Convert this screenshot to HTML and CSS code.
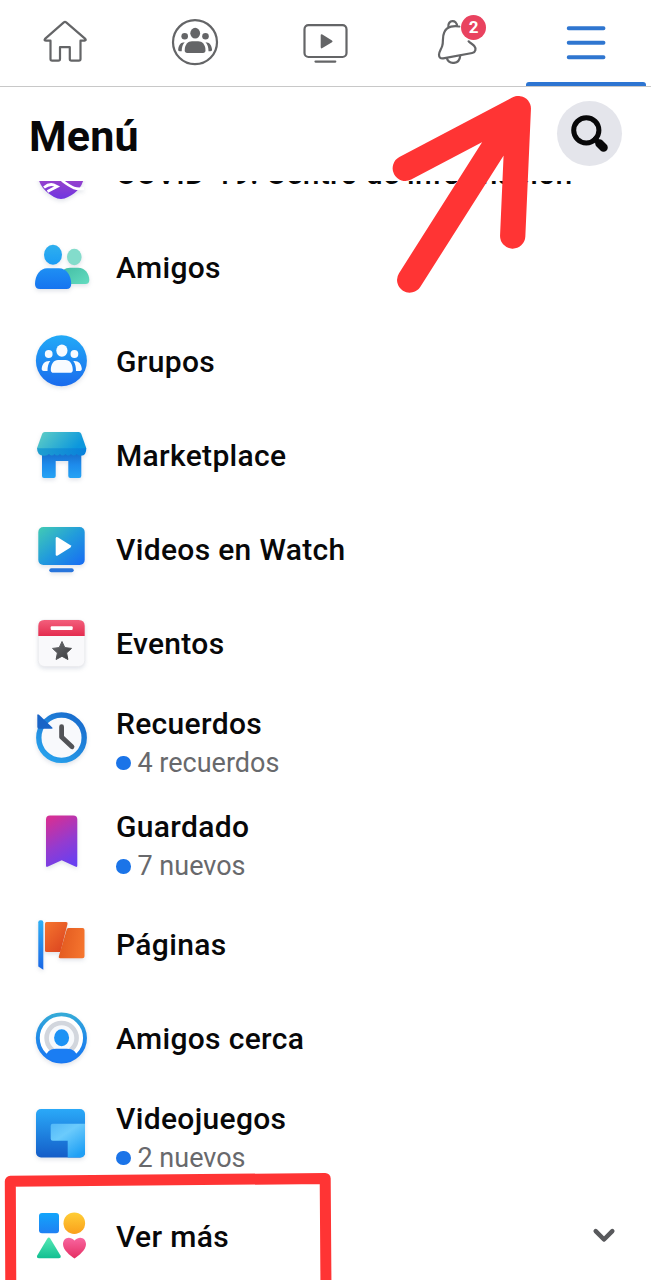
FILE: index.html
```html
<!DOCTYPE html>
<html lang="es">
<head>
<meta charset="utf-8">
<title>Menú</title>
<link rel="stylesheet" href="styles.css">
</head>
<body>
<div class="screen">
  <nav class="tabs">
    <div class="tab">
      <svg class="tab-icon" viewBox="0 0 60 60"><path class="line" d="M28.8 9.3Q30 8.300 31.200 9.300L50.300 25.800Q51.500 27.500 49.500 27.700H45.500V46Q45.500 47.700 43.800 47.700H36.500Q34.800 47.700 34.800 46V34.200H25V46Q25 47.700 23.300 47.700H17.200Q15.500 47.700 15.500 46V27.700H11.200Q8.700 27.500 10 25.800Z"/></svg>
    </div>
    <div class="tab">
      <svg class="tab-icon" viewBox="0 0 60 60"><circle class="line" cx="30" cy="29.200" r="22"/><g class="solid"><ellipse cx="30.200" cy="20.200" rx="4.900" ry="5.400"/><circle cx="19.700" cy="23.300" r="3.300"/><circle cx="40.500" cy="23.300" r="3.300"/><path d="M19.700 37.500C19.700 31.500 23 28.300 27 28.300h6.200c4 0 7.300 3.200 7.300 9.200 0 1.600-.9 2.500-2.500 2.500H22.200c-1.600 0-2.500-.9-2.500-2.500Z"/><path d="M19.700 29.200c-2 2.200-3 5-3 9h-2c-1.200 0-1.700-.8-1.500-2 .5-4.200 2.500-7 6.500-7Z"/><path d="M40.500 29.200c2 2.200 3 5 3 9h2c1.200 0 1.700-.8 1.500-2-.5-4.200-2.500-7-6.500-7Z"/></g></svg>
    </div>
    <div class="tab">
      <svg class="tab-icon" viewBox="0 0 60 60"><rect class="line" x="9.500" y="12.200" width="42" height="31.800" rx="4"/><path class="line" d="M20.500 48.600H40.300"/><path class="solid" d="M25.700 22.500q0-2 1.700-1l9.600 5.900q1.200.9 0 1.800l-9.600 5.900q-1.700 1-1.700-1Z"/></svg>
    </div>
    <div class="tab">
      <svg class="tab-icon" viewBox="0 0 60 60"><g class="line"><path d="M22.300 14.200C21.500 6.500 31 6 31 13.300M33.300 13.500C28.500 12.500 21 13 18.300 19.200C15.800 24.500 17.800 28 16.200 33C15.200 36.300 13 38.500 13 41.800C13 44.500 14.500 45.800 17.200 45.400L46.200 40C49.800 39.300 50.300 35.500 48.300 33C46.500 30.600 44.500 30.500 42.600 28.300"/><path d="M20.800 45.200C23 52 33.500 51.500 34.200 42.800"/></g></svg>
      <span class="badge">2</span>
    </div>
    <div class="tab tab-active">
      <svg class="tab-icon" viewBox="0 0 60 60"><path class="burger" d="M12.700 15.200H47.500M12.700 29.800H47.500M12.700 44.300H47.500"/></svg>
    </div>
  </nav>

  <header class="header">
    <h1 class="title">Menú</h1>
    <div class="search"><svg viewBox="0 0 65 65"><circle cx="29.300" cy="29.300" r="12.600"/><path class="neck" d="M38 38L42 42"/><path class="handle" d="M42.500 42.500L46.500 46.500"/></svg></div>
  </header>

  <main class="list">
    <div class="row row-cut">
      <svg class="icon" viewBox="0 0 60 60"><defs><linearGradient id="covid" x2="0" y2="1"><stop offset="0" stop-color="#b04ac0"/><stop offset="1" stop-color="#6f35e0"/></linearGradient></defs><path fill="url(#covid)" d="M6 24C4 40 13 48 22 53Q29 56.800 36 53C46 48 54 40 52 24Z"/><path d="M30 36.500Q38 42.500 42 44Q46 45.500 52 44.500M12 43.500Q17 39.500 21.500 40.800L25 42.500L15.500 47.500" fill="none" stroke="#fff" stroke-width="2.800"/></svg>
      <div class="text"><span class="name">COVID-19: Centro de información</span></div>
    </div>
    <div class="row">
      <svg class="icon" viewBox="0 0 60 60"><defs><linearGradient id="am1" x2="0" y2="1"><stop offset="0" stop-color="#2fb0ee"/><stop offset="1" stop-color="#1b9cf5"/></linearGradient><linearGradient id="am2" x2="0" y2="1"><stop offset="0" stop-color="#1e8ff3"/><stop offset="1" stop-color="#1674f0"/></linearGradient><linearGradient id="am3" x2="1" y2="1"><stop offset="0" stop-color="#45bfa6"/><stop offset="1" stop-color="#63dcc0"/></linearGradient></defs><ellipse cx="42.300" cy="19" rx="7.300" ry="8.200" fill="#83dccb"/><path fill="url(#am3)" d="M32 31.500Q34 29.800 38 29.800H46C53 29.800 57.300 36 57.300 42Q57.300 46 53.500 46H32Z"/><ellipse cx="21" cy="16.700" rx="9" ry="10" fill="url(#am1)"/><path fill="url(#am2)" d="M3 46C3 37 8.500 30.300 15 30.300H27C34 30.300 39.200 37 39.200 46Q39.200 51 34.500 51H8Q3 51 3 46Z"/></svg>
      <div class="text"><span class="name">Amigos</span></div>
    </div>
    <div class="row">
      <svg class="icon" viewBox="0 0 60 60"><defs><linearGradient id="gr" x2="0" y2="1"><stop offset="0" stop-color="#22aaf7"/><stop offset="1" stop-color="#1a6bed"/></linearGradient></defs><circle cx="29.400" cy="28.700" r="25.500" fill="url(#gr)"/><g fill="#f8fbff"><ellipse cx="29.900" cy="18.600" rx="5.600" ry="6.100"/><circle cx="16.700" cy="22" r="3.900"/><circle cx="42.400" cy="22" r="3.900"/><path d="M18.800 38C18.800 32 21.900 27.900 26 27.900h7.600c4.100 0 7.200 4.100 7.200 10.100 0 1.900-.9 2.800-2.800 2.800H21.600c-1.900 0-2.800-.9-2.800-2.800Z"/><path d="M18.200 29c-2 2.500-2.700 6-2.700 10h-3.800c-1.400 0-2.200-.8-2-2.400.6-4.800 3-8 8.500-7.600Z"/><path d="M41.300 29c2 2.500 2.700 6 2.700 10h3.800c1.400 0 2.200-.8 2-2.400-.6-4.800-3-8-8.500-7.600Z"/></g></svg>
      <div class="text"><span class="name">Grupos</span></div>
    </div>
    <div class="row">
      <svg class="icon" viewBox="0 0 60 60"><defs><linearGradient id="mk1" x2="1" y2=".3"><stop offset="0" stop-color="#62d0c4"/><stop offset="1" stop-color="#0c97dd"/></linearGradient><linearGradient id="mk2" x2="0" y2="1"><stop offset="0" stop-color="#176bc8"/><stop offset=".5" stop-color="#1d8bec"/><stop offset="1" stop-color="#25a3f4"/></linearGradient><linearGradient id="mk3" x2="1"><stop offset="0" stop-color="#1f9fcf"/><stop offset="1" stop-color="#0780dc"/></linearGradient></defs><path fill="url(#mk2)" d="M10 26H49.300V50Q49.300 52 47.300 52H38.300Q36.300 52 36.300 50V35H23.700V50Q23.700 52 21.700 52H12Q10 52 10 50Z"/><path fill="url(#mk3)" d="M5 22H54.300Q54.500 29.700 49 29.700Q46 29.700 44.500 28Q42 31 39 28Q36 31 33.500 28Q30.500 31 28 28Q25 31 22.500 28Q20 31 17 28Q15 30 12 29.700Q5 29.700 5 22Z"/><path fill="url(#mk1)" d="M12.700 6H46.700Q48.500 6 49.200 7.700L54.300 22.300H5L10.200 7.700Q10.900 6 12.700 6Z"/></svg>
      <div class="text"><span class="name">Marketplace</span></div>
    </div>
    <div class="row">
      <svg class="icon" viewBox="0 0 60 60"><defs><linearGradient id="vw" x2="1" y2="1"><stop offset="0" stop-color="#42cbb4"/><stop offset=".5" stop-color="#219bdc"/><stop offset="1" stop-color="#176bf4"/></linearGradient></defs><rect x="6.300" y="7" width="46.400" height="38" rx="5" fill="url(#vw)"/><rect x="17.300" y="48.300" width="24.400" height="4" rx="2" fill="#2875dc"/><path fill="#fff" d="M23.700 18.500q0-2.300 2-1.200l12.800 8q1.400 1.100 0 2.200l-12.800 8q-2 1.100-2-1.200Z"/></svg>
      <div class="text"><span class="name">Videos en Watch</span></div>
    </div>
    <div class="row">
      <svg class="icon" viewBox="0 0 60 60"><defs><linearGradient id="ev" x2="0" y2="1"><stop offset="0" stop-color="#f35f7c"/><stop offset="1" stop-color="#e42c4f"/></linearGradient><linearGradient id="evs" x2="1" y2="1"><stop offset="0" stop-color="#6a6b6e"/><stop offset="1" stop-color="#3c3d40"/></linearGradient></defs><rect x="6.300" y="6" width="46.400" height="46.500" rx="6" fill="#f9f9fb" stroke="#e9e9ec" stroke-width=".7"/><path fill="url(#ev)" d="M6.300 22V12Q6.300 6 12.300 6H46.700Q52.700 6 52.700 12V22Z"/><rect x="18.700" y="12.200" width="22" height="3.700" rx="1" fill="#fff"/><path fill="url(#evs)" stroke="url(#evs)" stroke-width="1" stroke-linejoin="round" d="M30 27.500l2.800 6.100 6.700.8-4.900 4.500 1.300 6.600-5.900-3.200-5.900 3.200 1.300-6.600-4.900-4.500 6.700-.8Z"/></svg>
      <div class="text"><span class="name">Eventos</span></div>
    </div>
    <div class="row row-double">
      <svg class="icon" viewBox="0 0 60 60"><defs><linearGradient id="rc" x1="1" y1="0" x2=".3" y2="1"><stop offset="0" stop-color="#1767ca"/><stop offset="1" stop-color="#279feb"/></linearGradient></defs><circle cx="29.500" cy="29.700" r="22.700" fill="#f8f9fc" stroke="url(#rc)" stroke-width="5.400"/><path fill="#1964c7" d="M5.300 7.500Q5.300 5.200 7 6.800L20.300 19.500Q21.300 20.700 19.500 20.700H7Q5.300 20.700 5.300 19Z"/><path fill="none" stroke="#525357" stroke-width="4.800" stroke-linecap="round" stroke-linejoin="round" d="M29.600 18.700V29L40 38.800"/></svg>
      <div class="text"><span class="name">Recuerdos</span><span class="note"><i class="dot"></i>4 recuerdos</span></div>
    </div>
    <div class="row row-double">
      <svg class="icon" viewBox="0 0 60 60"><defs><linearGradient id="gd" x1=".3" x2=".65" y2="1"><stop offset="0" stop-color="#d42f96"/><stop offset=".55" stop-color="#933bd0"/><stop offset="1" stop-color="#693ff0"/></linearGradient></defs><path fill="url(#gd)" d="M14 7.500Q14 3.500 18 3.500H41.300Q45.300 3.500 45.300 7.500V53.500Q45.300 55.700 43.300 54.500L29.700 48.300L16 54.500Q14 55.700 14 53.500Z"/></svg>
      <div class="text"><span class="name">Guardado</span><span class="note"><i class="dot"></i>7 nuevos</span></div>
    </div>
    <div class="row">
      <svg class="icon" viewBox="0 0 60 60"><defs><linearGradient id="pg1" x2="0" y2="1"><stop offset="0" stop-color="#2fb0f4"/><stop offset="1" stop-color="#1a66e6"/></linearGradient><linearGradient id="pg2" x2=".8" y2="1"><stop offset="0" stop-color="#f5752e"/><stop offset="1" stop-color="#dc4520"/></linearGradient><linearGradient id="pg3" x1="0" y1=".4" x2="1" y2=".6"><stop offset="0" stop-color="#e2591f"/><stop offset="1" stop-color="#f5752e"/></linearGradient></defs><path fill="url(#pg1)" d="M6.300 7.300Q6.300 5.300 8.300 5.300H9.300Q11.300 5.300 11.300 7.300V54.700L6.300 51.500Z"/><path fill="url(#pg2)" d="M13 8.500Q13 7 14.500 7H34Q36 7 35.500 9L28.500 37H14.500Q13 37 13 35.500Z"/><path fill="url(#pg3)" d="M34.700 14.500Q35 13 36.500 13H50.500Q52.500 13 52.500 15V41.300Q52.500 43.300 50.500 43.300H28Q26.300 43.300 26.800 41.500Z"/></svg>
      <div class="text"><span class="name">Páginas</span></div>
    </div>
    <div class="row">
      <svg class="icon" viewBox="0 0 60 60"><defs><linearGradient id="ac" x2="0" y2="1"><stop offset="0" stop-color="#34aad8"/><stop offset=".5" stop-color="#208ae8"/><stop offset="1" stop-color="#1978f2"/></linearGradient><clipPath id="acc"><circle cx="29.400" cy="29" r="24"/></clipPath></defs><circle cx="29.400" cy="29" r="23.600" fill="#fff" stroke="url(#ac)" stroke-width="3.900"/><circle cx="29.600" cy="29" r="15" fill="#f7f9fc" stroke="#d2d6dd" stroke-width="4.600"/><path clip-path="url(#acc)" fill="#1a7df3" d="M13 49Q15 39.800 24 39.800H35Q44 39.800 46 49V58H13Z"/><ellipse cx="29.600" cy="28.800" rx="7.500" ry="8.500" fill="#1c92f5"/></svg>
      <div class="text"><span class="name">Amigos cerca</span></div>
    </div>
    <div class="row row-double">
      <svg class="icon" viewBox="0 0 60 60"><defs><linearGradient id="vj1" x2="0" y2="1"><stop offset="0" stop-color="#2aa9f8"/><stop offset="1" stop-color="#145dc8"/></linearGradient><linearGradient id="vj2" x2=".7" y2="1"><stop offset="0" stop-color="#52b8f8"/><stop offset=".4" stop-color="#6bcbfc"/><stop offset="1" stop-color="#20a0f5"/></linearGradient></defs><rect x="4" y="6" width="49" height="48.500" rx="5" fill="url(#vj1)"/><path fill="url(#vj2)" d="M20.700 20.700H53V49.500Q53 54.500 48 54.500H35.700V37.700H20.700Q18.700 37.700 18.700 35.700V22.700Q18.700 20.700 20.700 20.700Z"/></svg>
      <div class="text"><span class="name">Videojuegos</span><span class="note"><i class="dot"></i>2 nuevos</span></div>
    </div>
    <div class="row">
      <svg class="icon icon-flat" viewBox="0 0 60 60"><defs><linearGradient id="s1" x2="0" y2="1"><stop offset="0" stop-color="#12a5fb"/><stop offset="1" stop-color="#1f80f3"/></linearGradient><linearGradient id="s2" x2="0" y2="1"><stop offset="0" stop-color="#ffce36"/><stop offset="1" stop-color="#faa01c"/></linearGradient><linearGradient id="s3" x2="0" y2="1"><stop offset="0" stop-color="#55e9b5"/><stop offset="1" stop-color="#12bf91"/></linearGradient><linearGradient id="s4" x2="0" y2="1"><stop offset="0" stop-color="#f866a0"/><stop offset="1" stop-color="#e52e62"/></linearGradient></defs><rect x="7" y="6" width="20" height="20.200" rx="3" fill="url(#s1)"/><circle cx="42.300" cy="16.200" r="10.800" fill="url(#s2)"/><path fill="url(#s3)" d="M15.200 31.800Q16.800 29.200 18.400 31.800L28.500 48.500Q29.500 51.300 26.700 51.300H7Q4.200 51.300 5.200 48.500Z"/><path fill="url(#s4)" d="M42.500 33.500C37 28 31 31.500 31 37.300C31 43 38 48.500 42.500 51.500C47 48.500 54 43 54 37.300C54 31.500 48 28 42.500 33.500Z"/></svg>
      <div class="text"><span class="name">Ver más</span></div>
      <svg class="chevron" viewBox="0 0 24 16"><path d="M3.700 4.200L12 12.500L20.300 4.200"/></svg>
    </div>
  </main>

  <svg class="marks" viewBox="0 0 651 1280"><path stroke-width="25.300" d="M405.300 168.300L518.300 108.700L512.700 236M518.300 108.700L409.700 280"/><path stroke-width="11" d="M10.800 1290L10.300 1181.300L325.200 1178.500L326 1290"/></svg>
</div>
</body>
</html>
```

FILE: styles.css
```css
* { box-sizing: border-box; }

body {
  margin: 0;
  background: #fff;
  color: #080809;
  font-family: Roboto, "Liberation Sans", sans-serif;
}

.screen {
  position: relative;
  display: flex;
  flex-direction: column;
  height: 1280px;
  overflow: hidden;
}

.tabs {
  display: grid;
  grid-template-columns: repeat(5, 1fr);
  height: 87px;
  border-bottom: 1px solid #c8c8c8;
}

.tab {
  position: relative;
  display: flex;
  align-items: center;
  justify-content: center;
}

.tab-icon { width: 60px; height: 60px; }

.tab-active::after {
  content: "";
  position: absolute;
  left: 5px;
  right: 5px;
  bottom: 0;
  height: 4px;
  border-radius: 3px 3px 0 0;
  background: #2d75d2;
}

.line {
  fill: none;
  stroke: #646567;
  stroke-width: 2.200;
  stroke-linecap: round;
  stroke-linejoin: round;
}

.solid { fill: #646567; }

.burger {
  fill: none;
  stroke: #2f76d0;
  stroke-width: 3.900;
  stroke-linecap: round;
}

.badge {
  position: absolute;
  left: 70.500px;
  top: 15px;
  width: 25px;
  height: 25px;
  border-radius: 50%;
  background: #e9425f;
  color: #fff;
  font-size: 17px;
  font-weight: 700;
  line-height: 25px;
  text-align: center;
}

.header {
  display: flex;
  align-items: center;
  justify-content: space-between;
  height: 94px;
  padding: 0 29px 1px;
}

.title {
  margin: 4px 0 0;
  font-size: 43px;
  font-weight: 700;
  line-height: 50px;
  letter-spacing: .2px;
}

.search {
  width: 65px;
  height: 65px;
  border-radius: 50%;
  background: #e4e5eb;
}

.search svg {
  display: block;
  fill: none;
  stroke: #080809;
  stroke-width: 5;
  stroke-linecap: round;
}

.search .handle { stroke-width: 8.500; }

.list {
  height: 1099px;
  overflow: hidden;
}

.row {
  display: flex;
  height: 94px;
  padding: 0 35px 0 32px;
}

.row-double { height: 103.500px; }

.row-cut { margin-top: -54px; }

.icon {
  width: 60px;
  height: 60px;
  margin-top: 17px;
  overflow: visible;
  filter: drop-shadow(0 2px 2px rgba(60, 80, 120, .16));
}

.icon-flat { filter: none; }

.text {
  display: flex;
  flex: 1;
  flex-direction: column;
  justify-content: center;
  padding-left: 24px;
}

.row-double .text { padding-top: 2px; }

.name {
  font-size: 30px;
  font-weight: 500;
  line-height: 38px;
  letter-spacing: .33px;
  white-space: nowrap;
}

.note {
  display: flex;
  align-items: center;
  gap: 7px;
  color: #68696c;
  font-size: 27px;
  line-height: 40px;
}

.dot {
  width: 14.500px;
  height: 14.500px;
  border-radius: 50%;
  background: #1b74e8;
}

.chevron {
  width: 24px;
  height: 16px;
  margin-top: 37px;
  fill: none;
  stroke: #58595c;
  stroke-width: 4.500;
  stroke-linecap: round;
  stroke-linejoin: round;
}

.marks {
  position: absolute;
  left: 0;
  top: 0;
  width: 651px;
  height: 1280px;
  fill: none;
  stroke: #ff3434;
  stroke-linecap: round;
  stroke-linejoin: round;
}
```
